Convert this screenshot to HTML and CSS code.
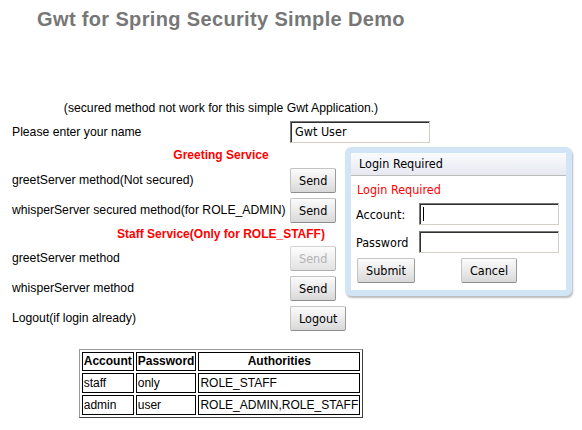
FILE: index.html
```html
<!DOCTYPE html>
<html>
<head>
<meta charset="utf-8">
<title>Gwt for Spring Security Simple Demo</title>
<link rel="stylesheet" href="styles.css">
</head>
<body>
<div class="page">
  <h1 class="title">Gwt for Spring Security Simple Demo</h1>
  <div class="row span note">(secured method not work for this simple Gwt Application.)</div>
  <div class="row name-row">
    <span class="label">Please enter your name</span>
    <input class="textbox name-box" type="text" value="Gwt User">
  </div>
  <div class="row span heading greet-head">Greeting Service</div>
  <div class="row btn-row">
    <span class="label">greetServer method(Not secured)</span>
    <button class="btn">Send</button>
  </div>
  <div class="row btn-row">
    <span class="label">whisperServer secured method(for ROLE_ADMIN)</span>
    <button class="btn">Send</button>
  </div>
  <div class="row span heading staff-head">Staff Service(Only for ROLE_STAFF)</div>
  <div class="row btn-row">
    <span class="label">greetServer method</span>
    <button class="btn" disabled>Send</button>
  </div>
  <div class="row btn-row">
    <span class="label">whisperServer method</span>
    <button class="btn">Send</button>
  </div>
  <div class="row btn-row">
    <span class="label">Logout(if login already)</span>
    <button class="btn">Logout</button>
  </div>
  <table class="users">
    <tr><th>Account</th><th>Password</th><th>Authorities</th></tr>
    <tr><td>staff</td><td>only</td><td>ROLE_STAFF</td></tr>
    <tr><td>admin</td><td>user</td><td>ROLE_ADMIN,ROLE_STAFF</td></tr>
  </table>
</div>

<div class="dialog">
  <div class="caption">Login Required</div>
  <div class="dialog-body">
    <div class="msg">Login Required</div>
    <div class="drow acc-row">
      <span class="dlabel">Account:</span>
      <span class="caret-wrap"><input class="textbox dbox" type="text"></span>
    </div>
    <div class="drow pw-row">
      <span class="dlabel">Password</span>
      <input class="textbox dbox" type="password">
    </div>
    <div class="drow actions">
      <button class="btn submit">Submit</button>
      <button class="btn cancel">Cancel</button>
    </div>
  </div>
</div>
</body>
</html>
```

FILE: styles.css
```css
html, body {
  margin: 0;
  padding: 0;
  background: #fff;
}

body {
  font-family: "Liberation Sans", Arial, sans-serif;
  font-size: 12.2px;
  color: #000;
}

.page {
  margin-left: 12px;
  width: 418px;
}

.title {
  margin: 7px 0 66px;
  font-size: 20px;
  line-height: 24px;
  letter-spacing: 0.35px;
  font-weight: bold;
  color: #777;
  text-align: center;
}

.row {
  display: grid;
  grid-template-columns: 278px auto;
  align-items: center;
}

.row.span {
  display: flex;
  justify-content: center;
}

.note {
  height: 21px;
}

.name-row {
  height: 27px;
}

.heading {
  color: #f00;
  font-weight: bold;
  font-size: 12px;
}

.greet-head {
  height: 20px;
}

.staff-head {
  height: 18px;
}

.btn-row {
  height: 30px;
}

.label {
  white-space: nowrap;
}

.btn, .textbox, .dialog {
  font-family: "DejaVu Sans Condensed", "DejaVu Sans", sans-serif;
  font-stretch: condensed;
}

.textbox {
  box-sizing: border-box;
  height: 22px;
  margin: 0;
  padding: 0 0 0 4px;
  font-size: 12.5px;
  color: #000;
  background: #fff;
  border: 1px solid;
  border-color: #7a7a7a #d4d0c8 #d4d0c8 #7a7a7a;
  box-shadow: inset 1px 1px 0 #303030;
  outline: none;
}

.name-box {
  width: 140px;
}

.btn {
  box-sizing: border-box;
  height: 25px;
  margin: 0;
  padding: 0 8px;
  font-size: 12.5px;
  color: #000;
  background: linear-gradient(#fbfbfb, #e9e9e9 55%, #d8d8d8);
  border: 1px solid;
  border-color: #c4c4c4 #9a9a9a #8e8e8e #c4c4c4;
  border-radius: 2px;
  justify-self: start;
}

.btn:disabled {
  color: #b4b4b4;
  background: linear-gradient(#fdfdfd, #eeeeee 55%, #e2e2e2);
  border-color: #d4d4d4 #b8b8b8 #b0b0b0 #d4d4d4;
}

.users {
  margin: 16px auto 0;
  border-collapse: separate;
  border-spacing: 2px;
  border: 1px solid;
  border-color: #9a9a9a #404040 #404040 #9a9a9a;
  font-size: 12px;
}

.users th, .users td {
  border: 1px solid #000;
  padding: 1px;
  line-height: 16px;
  white-space: nowrap;
}

.users th {
  font-weight: bold;
  text-align: center;
  line-height: 15px;
}

.users td {
  text-align: left;
}

/* Dialog popup */
.dialog {
  position: absolute;
  left: 345px;
  top: 147px;
  width: 215px;
  border: 6px solid #d2e5f7;
  border-radius: 6px;
  background: #fff;
  box-shadow: 1px 2px 2px rgba(0, 0, 0, 0.28);
}

.caption {
  height: 22px;
  line-height: 22px;
  padding-left: 8px;
  font-size: 12.5px;
  background: linear-gradient(#fafbfd, #e6e9f2);
  border-bottom: 1px solid #bbb;
}

.dialog-body {
  padding: 3px 7px 7px 5px;
  font-size: 12.5px;
}

.msg {
  height: 22px;
  line-height: 22px;
  padding-left: 1px;
  color: #f00;
}

.drow {
  display: grid;
  grid-template-columns: 63px 140px;
  align-items: center;
}

.acc-row {
  height: 26px;
}

.pw-row {
  height: 26px;
  margin-top: 2px;
}

.actions {
  margin-top: 3px;
}

.dbox {
  width: 140px;
  display: block;
}

.caret-wrap {
  position: relative;
  display: block;
}

.caret-wrap::after {
  content: "";
  position: absolute;
  left: 4px;
  top: 4px;
  width: 1px;
  height: 14px;
  background: #000;
}

.submit {
  margin-left: 1px;
}

.cancel {
  justify-self: center;
}
```
